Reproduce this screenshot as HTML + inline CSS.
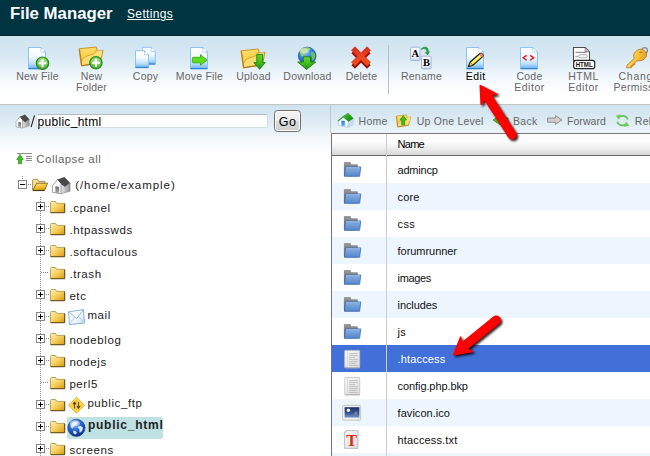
<!DOCTYPE html>
<html>
<head>
<meta charset="utf-8">
<title>File Manager</title>
<style>
html,body{margin:0;padding:0;}
body{width:650px;height:456px;overflow:hidden;background:#fff;font-family:"Liberation Sans",sans-serif;position:relative;}
.abs{position:absolute;}
#hdr{left:0;top:0;width:650px;height:35px;background:#003441;border-bottom:1px solid #00242e;}
#title{left:10px;top:3px;font-size:16.8px;font-weight:bold;color:#fff;line-height:22px;white-space:nowrap;}
#settings{left:127px;top:6px;font-size:12px;color:#fff;text-decoration:underline;line-height:16px;white-space:nowrap;letter-spacing:0.35px;}
#tb{left:0;top:36px;width:650px;height:68px;background:linear-gradient(#cde3f0 0px,#d7e8f3 20px,#f4f9fc 44px,#ffffff 58px,#ffffff 68px);border-bottom:1px solid #c4c4c4;}
.tl{position:absolute;top:71.4px;width:80px;margin-left:-39.5px;text-align:center;font-size:10.5px;line-height:11px;color:#666;letter-spacing:0.2px;white-space:nowrap;}
.tl.on{color:#000;}
#sep{left:388px;top:45px;width:1px;height:49px;background:#b9bdc1;}
#sub{left:0;top:105px;width:650px;height:50px;background:linear-gradient(#cfe3ef 0px,#dbeaf4 14px,#f3f8fb 34px,#ffffff 50px);}
#vdiv{left:330px;top:105px;width:1px;height:28px;background:#c3c6c8;}
#path{left:36px;top:114px;width:229px;height:12px;border-radius:2px;border:1px solid #d3dde4;border-top-color:#b4bcc2;border-left-color:#dbe3e8;background:#fff;font-size:12px;line-height:15px;color:#000;padding:0 0 0 0.5px;letter-spacing:0.3px;white-space:nowrap;overflow:visible;}
#slash{left:30.5px;top:113px;font-size:14px;line-height:16px;color:#000;}
#go{left:274px;top:110px;width:25px;height:20px;border:1px solid #707070;border-radius:3.5px;background:linear-gradient(#f4f4f4,#ebebeb 48%,#dcdcdc 52%,#cfcfcf);font-size:12.5px;line-height:22px;text-align:center;color:#000;box-shadow:inset 0 0 0 1px #fafafa;letter-spacing:0.3px;}
#coll{left:36.3px;top:152px;font-size:11.5px;line-height:14px;color:#666;letter-spacing:0.45px;white-space:nowrap;}
.tr{position:absolute;font-size:11.5px;line-height:14px;color:#222;letter-spacing:0.58px;margin-left:0.4px;white-space:nowrap;}
.nav{position:absolute;top:115px;font-size:10.5px;line-height:13px;color:#666;letter-spacing:0.3px;white-space:nowrap;}
#navbar{display:none;}
#thead{left:331px;top:133px;width:319px;height:21px;background:linear-gradient(#ffffff,#fbfbfb 40%,#ebebeb 72%,#d7d7d7);border-bottom:1px solid #686868;border-top:1px solid #787878;}
#thname{left:397.5px;top:138px;font-size:11px;line-height:13px;color:#000;letter-spacing:-0.7px;}
.row{position:absolute;left:332px;width:318px;height:27px;}
.row.alt{background:#edf5fe;}
.row.sel{background:#4170d9;}
.row span{position:absolute;left:65.6px;top:8px;font-size:11px;line-height:13px;color:#111;white-space:nowrap;letter-spacing:0.1px;}
.row.sel span{color:#fff;}
#lb{left:331px;top:133px;width:1px;height:323px;background:#747474;}
#colsep{left:386px;top:134px;width:1px;height:322px;background:#cdcdcd;}
</style>
</head>
<body>
<div id="hdr" class="abs"></div>
<div id="title" class="abs">File Manager</div>
<div id="settings" class="abs">Settings</div>

<div id="tb" class="abs"></div>
<div class="tl" style="left:37px">New File</div>
<div class="tl" style="left:91px">New<br>Folder</div>
<div class="tl" style="left:145px">Copy</div>
<div class="tl" style="left:199px">Move File</div>
<div class="tl" style="left:253px">Upload</div>
<div class="tl" style="left:307px">Download</div>
<div class="tl" style="left:361px">Delete</div>
<div id="sep" class="abs"></div>
<div class="tl" style="left:421px">Rename</div>
<div class="tl on" style="left:475.2px;letter-spacing:0.5px">Edit</div>
<div class="tl" style="left:529px">Code<br><span style="letter-spacing:0.55px">Editor</span></div>
<div class="tl" style="left:583px"><span style="letter-spacing:0.45px">HTML</span><br><span style="letter-spacing:0.55px">Editor</span></div>
<div class="tl" style="left:618.5px;margin-left:0;text-align:left;letter-spacing:0.75px">Change</div>
<div class="tl" style="left:613.5px;top:82.4px;margin-left:0;text-align:left;letter-spacing:0.3px">Permissions</div>

<div id="sub" class="abs"></div>
<div id="vdiv" class="abs"></div>

<div id="path" class="abs">public<span style="position:relative;top:-1.4px">_</span>html</div>
<div id="go" class="abs">Go</div>
<div id="coll" class="abs">Collapse all</div>

<div class="tr" style="left:74.8px;top:178px;letter-spacing:0.95px">(/home/example)</div>
<div class="tr" style="left:69px;top:201px">.cpanel</div>
<div class="tr" style="left:69px;top:223px">.htpasswds</div>
<div class="tr" style="left:69px;top:245px">.softaculous</div>
<div class="tr" style="left:69px;top:267px">.trash</div>
<div class="tr" style="left:69px;top:289px">etc</div>
<div class="tr" style="left:87px;top:308px">mail</div>
<div class="tr" style="left:69px;top:333px">nodeblog</div>
<div class="tr" style="left:69px;top:355px">nodejs</div>
<div class="tr" style="left:69px;top:377px">perl5</div>
<div class="tr" style="left:87px;top:395.5px">public_ftp</div>
<div class="abs" style="left:67px;top:417px;width:96px;height:22px;background:#c0e1e3;border-radius:2.5px"></div>
<div class="tr" style="left:87.5px;top:417.5px;font-weight:bold;font-size:12px;letter-spacing:0.75px">public_html</div>
<div class="tr" style="left:69px;top:443px">screens</div>

<div id="navbar" class="abs"></div>
<div class="nav" style="left:358.5px">Home</div>
<div class="nav" style="left:416.8px;letter-spacing:0.22px">Up One Level</div>
<div class="nav" style="left:513px">Back</div>
<div class="nav" style="left:567px;letter-spacing:0.05px">Forward</div>
<div class="nav" style="left:634.8px">Reload</div>

<div id="thead" class="abs"></div>
<div id="thname" class="abs">Name</div>
<div class="row" style="top:156px"><span style="letter-spacing:-0.23px">admincp</span></div>
<div class="row alt" style="top:183px"><span style="letter-spacing:0.15px">core</span></div>
<div class="row" style="top:210px"><span style="letter-spacing:0.35px">css</span></div>
<div class="row alt" style="top:237px"><span style="letter-spacing:-0.05px">forumrunner</span></div>
<div class="row" style="top:264px"><span style="letter-spacing:-0.38px">images</span></div>
<div class="row alt" style="top:291px"><span style="letter-spacing:-0.1px">includes</span></div>
<div class="row" style="top:318px"><span style="letter-spacing:0.1px">js</span></div>
<div class="row sel" style="top:345px"><span style="letter-spacing:0.15px">.htaccess</span></div>
<div class="row" style="top:372px"><span style="letter-spacing:-0.09px">config.php.bkp</span></div>
<div class="row alt" style="top:399px"><span style="letter-spacing:0.04px">favicon.ico</span></div>
<div class="row" style="top:426px"><span style="letter-spacing:0.14px">htaccess.txt</span></div>
<div class="row alt" style="top:453px"></div>
<div id="colsep" class="abs"></div>
<div id="lb" class="abs"></div>

<svg id="ic" class="abs" style="left:0;top:0" width="650" height="456" viewBox="0 0 650 456">
<defs>
<linearGradient id="gDoc" x1="0" y1="0" x2="0" y2="1"><stop offset="0" stop-color="#ffffff"/><stop offset="0.42" stop-color="#f3f9ff"/><stop offset="0.74" stop-color="#c2e1fa"/><stop offset="0.93" stop-color="#7dbcf0"/><stop offset="1" stop-color="#3c8cdb"/></linearGradient>
<linearGradient id="gFold" x1="0" y1="0" x2="0.25" y2="1"><stop offset="0" stop-color="#fde27a"/><stop offset="0.5" stop-color="#fbd148"/><stop offset="1" stop-color="#f2b824"/></linearGradient>
<radialGradient id="gPlus" cx="0.5" cy="0.35" r="0.7"><stop offset="0" stop-color="#c9efb2"/><stop offset="0.55" stop-color="#74c653"/><stop offset="1" stop-color="#35992a"/></radialGradient>
<linearGradient id="gGrn" x1="0" y1="0" x2="0" y2="1"><stop offset="0" stop-color="#63d22c"/><stop offset="0.5" stop-color="#43c01c"/><stop offset="1" stop-color="#1f8c10"/></linearGradient>
<radialGradient id="gGlobe" cx="0.4" cy="0.3" r="0.75"><stop offset="0" stop-color="#8fc4ff"/><stop offset="0.5" stop-color="#2b82e8"/><stop offset="1" stop-color="#0e4fb0"/></radialGradient>
<linearGradient id="gRed" x1="0" y1="0" x2="0" y2="1"><stop offset="0" stop-color="#d42a18"/><stop offset="0.5" stop-color="#ec4428"/><stop offset="1" stop-color="#f35212"/></linearGradient>
<linearGradient id="gCard" x1="0" y1="0" x2="0" y2="1"><stop offset="0" stop-color="#ffffff"/><stop offset="0.7" stop-color="#f6f8fd"/><stop offset="1" stop-color="#c9d4f0"/></linearGradient>
<linearGradient id="gKey" x1="0" y1="0" x2="1" y2="1"><stop offset="0" stop-color="#ffe07a"/><stop offset="0.5" stop-color="#fcc340"/><stop offset="1" stop-color="#e9981c"/></linearGradient>
<g id="doc"><path d="M0.5,0.5 H13 L17.5,5 V22 H0.5 Z" fill="url(#gDoc)" stroke="#8fc3ee" stroke-width="1"/><path d="M0.5,21.6 H17.5" stroke="#2f7fd2" stroke-width="1"/><path d="M13,0.5 V5 H17.5" fill="#d8ecfb" stroke="#8cc0ec" stroke-width="0.8"/><circle cx="14.3" cy="3.6" r="1.5" fill="#ffffff" opacity="0.9"/></g>
<g id="sdoc"><path d="M0.5,0.5 H9.5 L13.5,4.5 V17.5 H0.5 Z" fill="url(#gDoc)" stroke="#8fc3ee" stroke-width="1"/><path d="M0.5,17.2 H13.5" stroke="#2f7fd2" stroke-width="1"/><path d="M9.5,0.5 V4.5 H13.5" fill="#d8ecfb" stroke="#8cc0ec" stroke-width="0.8"/><circle cx="10.8" cy="3.2" r="1.3" fill="#ffffff" opacity="0.9"/></g>
<g id="plus"><circle cx="0" cy="0" r="6.2" fill="url(#gPlus)" stroke="#2a8a1c" stroke-width="1.2"/><path d="M-4,0 H4 M0,-4 V4" stroke="#ffffff" stroke-width="1.9"/></g>
<g id="bfolder"><path d="M0,1.8 L17.2,0 L18,2.8 L18.2,4.3 L24,3.2 L22.3,11.5 L20.5,16 L2.3,18.8 Z" fill="url(#gFold)" stroke="#c58a1c" stroke-width="0.9" stroke-linejoin="round"/><path d="M17.6,4.4 L23.4,3.6 L21.8,11" fill="#fbe38a" stroke="none"/><path d="M2.8,14 C5,9.5 8,9 12,7.8 C15,7 16.5,6 17.6,3 L18.2,4.3 L22,3.8 L20.6,11 L19.6,15.6 L3,18 Z" fill="#fde27a" opacity="0.85"/><path d="M2.8,14 C5,9.5 8,9 12,7.8 C15,7 16.5,6 17.6,3" fill="none" stroke="#c9952c" stroke-width="0.8"/><path d="M0.6,2.4 L2.7,18.2" stroke="#a86e10" stroke-width="0.8"/><path d="M2.3,18.8 L20.5,16" stroke="#9a6a1a" stroke-width="0.9"/></g>
</defs>

<!-- New File -->
<use href="#doc" x="28" y="47"/>
<use href="#plus" x="42.5" y="63.2"/>
<!-- New Folder -->
<use href="#bfolder" x="79" y="47"/>
<use href="#plus" x="95.9" y="62.8"/>
<!-- Copy -->
<use href="#sdoc" x="141.8" y="46.8"/>
<use href="#sdoc" x="135" y="50.2"/>
<!-- Move File -->
<use href="#doc" x="190" y="47"/>
<path d="M193.3,57.3 H200.5 V54.6 L207,60.2 L200.5,65.2 V62.8 H193.3 Q192.4,62.8 192.4,61.8 V58.3 Q192.4,57.3 193.3,57.3 Z" fill="#5fdc1a" stroke="#3aa912" stroke-width="0.9" stroke-linejoin="round"/>
<!-- Upload -->
<use href="#bfolder" x="241" y="49"/>
<path d="M256.8,54.4 H262.8 V62.6 H265.2 L259.6,69.3 L253.8,62.6 H256.8 Z" fill="url(#gGrn)" stroke="#1f7f12" stroke-width="0.9" stroke-linejoin="round"/>
<!-- Download -->
<circle cx="307.2" cy="55.9" r="8.8" fill="url(#gGlobe)" stroke="#1b4f9a" stroke-width="0.7"/>
<path d="M299.5,51.5 C300.5,48.5 304,47 307,47.3 C309,47.5 311,48.3 310.5,49.5 C309,51 307.5,51 306,53.5 C304.5,55.5 303.5,54.5 302.5,56.5 C301.5,57 300.5,55 299.5,51.5 Z" fill="#9ccf6e" opacity="0.95"/>
<path d="M311.5,52 C313.5,51.5 315,53 315.3,55 C315.3,58 314,60.5 312.5,61 C311.5,59 312.5,57.5 311.5,56 C310.8,54.5 310.8,53 311.5,52 Z" fill="#6fbf4e"/>
<ellipse cx="304.5" cy="50.8" rx="4.2" ry="2.6" fill="#ffffff" opacity="0.45"/>
<path d="M303.3,56.8 H310.5 V62 H315.8 L306.6,69.4 L297.7,62 H303.3 Z" fill="url(#gGrn)" stroke="#1c7d10" stroke-width="0.9" stroke-linejoin="round"/>
<!-- Delete -->
<g transform="translate(361,59.2)"><path d="M-6,-9.6 L0,-3.6 L6,-9.6 L9.6,-6 L3.6,0 L9.6,6 L6,9.6 L0,3.6 L-6,9.6 L-9.6,6 L-3.6,0 L-9.6,-6 Z" fill="#9c1408"/></g>
<g transform="translate(361,56.3)"><path d="M-6,-9.6 L0,-3.6 L6,-9.6 L9.6,-6 L3.6,0 L9.6,6 L6,9.6 L0,3.6 L-6,9.6 L-9.6,6 L-3.6,0 L-9.6,-6 Z" fill="url(#gRed)" stroke="#c42410" stroke-width="0.5"/></g>
<!-- Rename -->
<rect x="410.6" y="47.2" width="9.4" height="13.2" rx="0.8" fill="url(#gCard)" stroke="#9aabcf" stroke-width="0.9"/>
<text x="415.3" y="57.2" font-family="Liberation Serif, serif" font-weight="bold" font-size="10.5" text-anchor="middle" fill="#000">A</text>
<rect x="421.6" y="56.2" width="9.4" height="12.6" rx="0.8" fill="url(#gCard)" stroke="#9aabcf" stroke-width="0.9"/>
<text x="426.4" y="66.3" font-family="Liberation Serif, serif" font-weight="bold" font-size="10.5" text-anchor="middle" fill="#000">B</text>
<path d="M421,49.4 C422.5,46.8 426,46.2 427.6,48.2 C428.6,49.6 428.4,51 428.2,52 L429.6,51.6 L427.6,55 L425.2,52.6 L426.6,52.4 C426.8,51 426.6,49.8 425.6,49.2 C424.4,48.6 422.6,48.8 421,49.4 Z" fill="#25a043" stroke="#158034" stroke-width="0.4"/>
<!-- Edit -->
<use href="#doc" x="466" y="47"/>
<g transform="translate(468.5,66.4) rotate(-41.5)"><path d="M0,0 L4.2,-2.1 H16.3 Q18.6,-2.1 18.6,0 Q18.6,2.1 16.3,2.1 H4.2 Z" fill="#ffe720" stroke="#111" stroke-width="1.15" stroke-linejoin="round"/><path d="M0,0 L4.2,-2.1 V2.1 Z" fill="#f3c64e" stroke="#1a1a1a" stroke-width="0.5"/><path d="M0,0 L1.6,-0.8 V0.8 Z" fill="#222"/><path d="M16.4,-2.1 H16.6 Q18.6,-2.1 18.6,0 Q18.6,2.1 16.6,2.1 H16.4 Z" fill="#f2818a" stroke="#c04855" stroke-width="0.5"/><path d="M4.6,-0.4 H15.2" stroke="#fff9a8" stroke-width="1.1"/></g>
<!-- Code Editor -->
<use href="#doc" x="520" y="47"/>
<path d="M526.6,55.4 L523.2,57.8 L526.6,60.2 M530.2,55.4 L533.6,57.8 L530.2,60.2" fill="none" stroke="#f01010" stroke-width="1.4"/>
<!-- HTML Editor -->
<path d="M573.5,47.5 H585.2 L589.5,51.8 V61 H573.5 Z" fill="#ffffff" stroke="#4e4e4e" stroke-width="1.1"/>
<path d="M585.2,47.5 V51.8 H589.5 Z" fill="#cfcfcf" stroke="#5c5c5c" stroke-width="0.7"/>
<path d="M575.5,52.3 H586.5" stroke="#777" stroke-width="1"/>
<path d="M575.5,56.3 H578" stroke="#999" stroke-width="1"/>
<rect x="578.6" y="54.6" width="8.6" height="3.2" rx="1.4" fill="#f3f3f3" stroke="#9a9a9a" stroke-width="0.7"/>
<rect x="573.7" y="60.4" width="21" height="8.2" rx="2.2" fill="#ffffff" stroke="#262626" stroke-width="1.2"/>
<text x="584.2" y="67.2" font-family="Liberation Sans, sans-serif" font-weight="bold" font-size="6.6" text-anchor="middle" fill="#111" textLength="17" lengthAdjust="spacingAndGlyphs">HTML</text>
<!-- Key -->
<circle cx="644.7" cy="50.4" r="2.7" fill="none" stroke="#8a8a8a" stroke-width="1.3"/>
<g transform="translate(640,55) rotate(-43)"><path d="M-5.5,-3.6 C-3,-6.2 3.5,-6.4 5.6,-2.2 C6.6,0 6.4,3 4.4,4.8 C2,6.6 -2.6,6 -5,3.2 L-6.6,2.2 L-16.4,2.2 L-18.4,0.4 L-16.6,-1.4 L-6.4,-1.4 Z" fill="url(#gKey)" stroke="#b4690e" stroke-width="0.7" stroke-linejoin="round"/><path d="M-16,2.2 l1,1.4 l1.4,-1.4 l1,1.3 l1.3,-1.3 l1,1.4 l1.4,-1.4" fill="#f0a21c" stroke="#b4690e" stroke-width="0.5"/><path d="M1.5,-2.5 L3.6,-0.4" stroke="#a5640e" stroke-width="1"/></g>
<path d="M31.1,127.2 L34.5,115.4" stroke="#1a1a1a" stroke-width="1.05"/>
<!-- tree -->
<defs>
<linearGradient id="gSF" x1="0" y1="0" x2="1" y2="1"><stop offset="0" stop-color="#fdf0b4"/><stop offset="0.45" stop-color="#f8d466"/><stop offset="1" stop-color="#d99a14"/></linearGradient>
<linearGradient id="gOF" x1="0" y1="0" x2="0.3" y2="1"><stop offset="0" stop-color="#fde48a"/><stop offset="0.5" stop-color="#f8c93a"/><stop offset="1" stop-color="#e3a010"/></linearGradient>
<g id="tplus"><rect x="0.5" y="0.5" width="8" height="8" fill="#fff" stroke="#868686" stroke-width="1"/><path d="M2,4.5 H7 M4.5,2 V7" stroke="#000" stroke-width="1" shape-rendering="crispEdges"/></g>
<g id="sfolder"><path d="M0.5,2.4 V11.6 H14.6 V2.4 H6.6 L5.6,0.5 H1.2 L0.5,1.4 Z" fill="url(#gSF)" stroke="#b89a4e" stroke-width="0.9" stroke-linejoin="round"/><path d="M0.6,11.7 H14.7 V2.6" fill="none" stroke="#5e4c1c" stroke-width="1"/></g>
<g id="house"><path d="M5.6,2.6 L12.4,0 L18.5,6.2 L13.2,9.9 Z" fill="#484848"/><path d="M5.9,2.4 L0.4,8.7 V15.3 L9.2,16.8 V6.6 Z" fill="#ffffff" stroke="#8c8c8c" stroke-width="0.8" stroke-linejoin="round"/><path d="M9.2,7 L13.3,9.4 L18.1,6.1 V14.2 L9.2,16.8 Z" fill="url(#gWall)" stroke="#8c8c8c" stroke-width="0.6" stroke-linejoin="round"/><path d="M3.3,9.2 L7.2,9.8 V16.4 L3.3,15.8 Z" fill="url(#gDoor)"/><path d="M5.9,2.4 L9.4,6.8 L13.3,9.4" fill="none" stroke="#3c3c3c" stroke-width="1"/></g>
<linearGradient id="gWall" x1="0" y1="0" x2="1" y2="0"><stop offset="0" stop-color="#e6e6e6"/><stop offset="1" stop-color="#909090"/></linearGradient>
<linearGradient id="gDoor" x1="0" y1="0" x2="0" y2="1"><stop offset="0" stop-color="#6a6a6a"/><stop offset="1" stop-color="#b0b0b0"/></linearGradient>
</defs>
<path d="M22.5,176 V180" stroke="#8a8a8a" stroke-width="1" stroke-dasharray="1,1"/>
<path d="M28,184.5 H31" stroke="#8a8a8a" stroke-width="1" stroke-dasharray="1,1"/>
<path d="M40.5,197 V456" stroke="#8a8a8a" stroke-width="1" stroke-dasharray="1,1"/>
<path d="M46,206.5 H49" stroke="#8a8a8a" stroke-width="1" stroke-dasharray="1,1"/>
<use href="#tplus" x="36" y="202"/>
<use href="#sfolder" x="50" y="201"/>
<path d="M46,228.5 H49" stroke="#8a8a8a" stroke-width="1" stroke-dasharray="1,1"/>
<use href="#tplus" x="36" y="224"/>
<use href="#sfolder" x="50" y="223"/>
<path d="M46,250.5 H49" stroke="#8a8a8a" stroke-width="1" stroke-dasharray="1,1"/>
<use href="#tplus" x="36" y="246"/>
<use href="#sfolder" x="50" y="245"/>
<path d="M41,272.5 H49" stroke="#8a8a8a" stroke-width="1" stroke-dasharray="1,1"/>
<use href="#sfolder" x="50" y="267"/>
<path d="M46,294.5 H49" stroke="#8a8a8a" stroke-width="1" stroke-dasharray="1,1"/>
<use href="#tplus" x="36" y="290"/>
<use href="#sfolder" x="50" y="289"/>
<path d="M46,316.5 H49" stroke="#8a8a8a" stroke-width="1" stroke-dasharray="1,1"/>
<use href="#tplus" x="36" y="312"/>
<use href="#sfolder" x="50" y="311"/>
<path d="M46,338.5 H49" stroke="#8a8a8a" stroke-width="1" stroke-dasharray="1,1"/>
<use href="#tplus" x="36" y="334"/>
<use href="#sfolder" x="50" y="333"/>
<path d="M46,360.5 H49" stroke="#8a8a8a" stroke-width="1" stroke-dasharray="1,1"/>
<use href="#tplus" x="36" y="356"/>
<use href="#sfolder" x="50" y="355"/>
<path d="M41,382.5 H49" stroke="#8a8a8a" stroke-width="1" stroke-dasharray="1,1"/>
<use href="#sfolder" x="50" y="377"/>
<path d="M46,404.5 H49" stroke="#8a8a8a" stroke-width="1" stroke-dasharray="1,1"/>
<use href="#tplus" x="36" y="400"/>
<use href="#sfolder" x="50" y="399"/>
<path d="M46,426.5 H49" stroke="#8a8a8a" stroke-width="1" stroke-dasharray="1,1"/>
<use href="#tplus" x="36" y="422"/>
<use href="#sfolder" x="50" y="421"/>
<path d="M46,448.5 H49" stroke="#8a8a8a" stroke-width="1" stroke-dasharray="1,1"/>
<use href="#tplus" x="36" y="444"/>
<use href="#sfolder" x="50" y="443"/>
<rect x="18.5" y="180.5" width="8" height="8" fill="#fff" stroke="#868686"/><path d="M20,184.5 H25" stroke="#000" stroke-width="1" shape-rendering="crispEdges"/>
<path d="M32.6,190.2 V180.2 L33.4,179.3 H37.6 L38.6,181.3 H44.8 V183.2" fill="#f6e292" stroke="#9a8750" stroke-width="0.9" stroke-linejoin="round"/>
<path d="M32.8,190.3 L36.6,183.2 H47.6 L44.6,190.3 Z" fill="url(#gOF)" stroke="#7a6326" stroke-width="0.9" stroke-linejoin="round"/>
<path d="M33,190.6 H44.8" stroke="#3a2e10" stroke-width="0.9"/>
<use href="#house" x="52" y="177"/>
<g transform="translate(15.8,114.6) scale(0.74,0.8)"><use href="#house"/></g>
<path d="M17,153.5 H32 M25.5,156.5 H32 M25.5,158.5 H32 M25.5,160.5 H32" stroke="#8e8e8e" stroke-width="1" shape-rendering="crispEdges"/>
<path d="M20,154.4 L23.2,159.6 H21.5 V163.7 H18.5 V159.6 H16.8 Z" fill="#3fc01e" stroke="#238f12" stroke-width="0.7" stroke-linejoin="round"/>
<defs><linearGradient id="gMail" x1="0" y1="0" x2="1" y2="1"><stop offset="0" stop-color="#ffffff"/><stop offset="0.6" stop-color="#eef6fc"/><stop offset="1" stop-color="#bcd8ef"/></linearGradient></defs>
<g transform="translate(68,309)"><path d="M0.6,2.8 L15.4,0.6 L16.6,14 L1.4,15.6 Z" fill="url(#gMail)" stroke="#7eaad2" stroke-width="0.9" stroke-linejoin="round"/><path d="M0.8,3 L8.6,9.6 L15.4,0.8" fill="none" stroke="#86b0d8" stroke-width="0.9"/><path d="M1.4,15.4 L6.6,8.2 M16.4,13.8 L10.4,7.4" stroke="#a4c8e6" stroke-width="0.8"/></g>
<g transform="translate(76.5,405.2)"><path d="M0,-8 L8,0 L0,8 L-8,0 Z" fill="#f8c830" stroke="#e0a010" stroke-width="0.8" stroke-linejoin="round"/><path d="M0,-6.6 L6.6,0 L0,6.6 L-6.6,0 Z" fill="none" stroke="#fde58a" stroke-width="0.8"/><path d="M-2,3.2 V-1.8 M-3.4,-1.2 L-2,-3.4 L-0.6,-1.2 Z M2,-3.2 V1.8 M0.6,1.2 L2,3.4 L3.4,1.2 Z" stroke="#5e4216" stroke-width="0.9" fill="#5e4216"/></g>
<defs><radialGradient id="gGl2" cx="0.4" cy="0.28" r="0.8"><stop offset="0" stop-color="#a8d0ff"/><stop offset="0.4" stop-color="#2f70d8"/><stop offset="1" stop-color="#08236e"/></radialGradient></defs>
<g transform="translate(76.4,427.8)"><circle r="8.6" fill="url(#gGl2)" stroke="#16357e" stroke-width="0.6"/><path d="M-6,-2 C-5,-5 -2,-6.5 1,-6.2 C2,-5 0.5,-4 -0.5,-3 C-1.5,-1.5 -3,-1.5 -3.5,0.5 C-4.5,1 -5.5,0 -6,-2 Z M1.5,-1 C3,-2.5 5.5,-2 6.5,0 C6.5,2.5 5,4.5 3.5,5 C2.5,3.5 3.5,2 2.5,1 C1.5,0.5 1,0 1.5,-1 Z M-3,3 C-1.5,2.5 0,3.5 0.5,5 C0,6.5 -1.5,7 -2.5,6 C-3,5 -3.5,4 -3,3 Z" fill="#e6f0ff" opacity="0.9"/><ellipse cx="-1.5" cy="-4.6" rx="5" ry="2.8" fill="#fff" opacity="0.45"/></g>
<!-- nav icons -->
<defs>
<linearGradient id="gBF" x1="0" y1="0" x2="0" y2="1"><stop offset="0" stop-color="#8ab0e2"/><stop offset="1" stop-color="#5686ca"/></linearGradient>
<linearGradient id="gBB" x1="0" y1="0" x2="0" y2="1"><stop offset="0" stop-color="#9a9a9a"/><stop offset="1" stop-color="#5c5c5c"/></linearGradient>
<g id="blfolder"><path d="M0.3,0.6 Q0.3,0 0.9,0 H6.4 Q7,0 7.2,0.6 L7.6,2.3 H13.6 Q14.2,2.3 14.2,2.9 V13.6 Q14.2,14.3 13.6,14.3 H0.9 Q0.3,14.3 0.3,13.6 Z" fill="url(#gBB)"/><path d="M1.9,4.9 H17.2 L16,14.3 H0.9 Z" fill="url(#gBF)" stroke="#3f6fb8" stroke-width="0.8" stroke-linejoin="round"/><path d="M2.4,5.7 H16.4" stroke="#a9c6ee" stroke-width="0.7"/></g>
<linearGradient id="gPage" x1="0" y1="0" x2="1" y2="1"><stop offset="0" stop-color="#fafafa"/><stop offset="1" stop-color="#dcdcdc"/></linearGradient>
<g id="fdoc"><rect x="0.4" y="0.4" width="15" height="17.4" rx="0.8" fill="url(#gPage)" stroke="#c2c2c2" stroke-width="0.8"/><path d="M3.2,1 V17.2" stroke="#d0d0d0" stroke-width="0.7"/><path d="M4.6,3.6 H13.4 M4.6,5.6 H13.4 M4.6,7.6 H10.8 M4.6,9.6 H13.4 M4.6,11.6 H13.4 M4.6,13.6 H12 M4.6,15.6 H13.4" stroke="#b4b4b4" stroke-width="0.8"/><path d="M0.6,17.8 H15.4" stroke="#a8a8a8" stroke-width="0.8"/></g>
</defs>
<defs><linearGradient id="gRoof" x1="0" y1="0" x2="1" y2="1"><stop offset="0" stop-color="#4ccc34"/><stop offset="0.5" stop-color="#22a418"/><stop offset="1" stop-color="#0e7e0a"/></linearGradient><linearGradient id="gDr" x1="0" y1="0" x2="0" y2="1"><stop offset="0" stop-color="#1478ee"/><stop offset="1" stop-color="#5cb4ff"/></linearGradient></defs><g transform="translate(338,113)"><path d="M4.9,3.9 L0.3,7.8 L0.5,12.5 L9.9,14.3 L10.5,8.2 Z" fill="#ffffff" stroke="#a6c6e8" stroke-width="0.7" stroke-linejoin="round"/><path d="M10.5,8.2 L15,5.4 V11.9 L9.9,14.3 Z" fill="#cbdef4" stroke="#a6c6e8" stroke-width="0.6" stroke-linejoin="round"/><path d="M3.4,7.6 L6.8,7.9 V13.2 L3.4,12.7 Z" fill="url(#gDr)"/><path d="M4.9,3.6 L10,0.2 L15.3,5.3 L10.6,8.5 Z" fill="url(#gRoof)" stroke="#1c9414" stroke-width="0.5" stroke-linejoin="round"/><path d="M5.2,3.8 L0.2,7.9" stroke="#2aa81e" stroke-width="1.2" stroke-linecap="round"/></g>
<g transform="translate(396.2,114.8) scale(0.6,0.65)"><use href="#bfolder"/></g>
<path d="M403.2,115.6 L406.4,120 H404.7 V124.8 H401.7 V120 H400 Z" fill="#3cc31a" stroke="#1f8a12" stroke-width="0.7" stroke-linejoin="round"/>
<path d="M493,120 L500,115.4 V118 H508 V122.2 H500 V124.8 Z" fill="#4cc41e" stroke="#2a8f14" stroke-width="0.7" stroke-linejoin="round"/>
<path d="M547.6,118 H555.4 V115.6 L562,120 L555.4,124.4 V122.2 H547.6 Z" fill="#cfcfcf" stroke="#7c7c7c" stroke-width="0.8" stroke-linejoin="round"/>
<g transform="translate(1245.2,0.2) scale(-1,1)"><g fill="none" stroke="#62c45c" stroke-width="1.8" stroke-linecap="butt"><path d="M617.4,119.2 C618.4,116 622.4,114.8 625.6,116.6"/><path d="M628,121.6 C627,125 623,126.2 619.8,124.4"/></g>
<path d="M624.4,114.2 L629.4,115.6 L626.2,119.6 Z" fill="#6ccc52"/><path d="M621,126.8 L616,125.4 L619.2,121.4 Z" fill="#6ccc52"/></g>
<use href="#blfolder" x="343.6" y="162"/>
<use href="#blfolder" x="343.6" y="189"/>
<use href="#blfolder" x="343.6" y="216"/>
<use href="#blfolder" x="343.6" y="243"/>
<use href="#blfolder" x="343.6" y="270"/>
<use href="#blfolder" x="343.6" y="297"/>
<use href="#blfolder" x="343.6" y="324"/>
<use href="#fdoc" x="344.3" y="350"/>
<use href="#fdoc" x="344.3" y="377"/>
<defs><linearGradient id="gImg" x1="0" y1="0" x2="0" y2="1"><stop offset="0" stop-color="#1c2f6a"/><stop offset="0.6" stop-color="#3a5a9c"/><stop offset="1" stop-color="#7c96c4"/></linearGradient></defs>
<rect x="342.6" y="405.3" width="18" height="14.8" rx="1.2" fill="#f2f2f2" stroke="#b8b8b8" stroke-width="0.8"/><rect x="344.6" y="407.2" width="14.8" height="10.4" fill="url(#gImg)"/><circle cx="348.4" cy="410.3" r="1.7" fill="#f4f2c4"/><path d="M353.4,414.4 L355.6,411.2 L357.6,412.6 L356.8,415.6 Z" fill="#76809a"/><path d="M357.6,420 L360.6,417 V420 Z" fill="#fff" stroke="#b0b0b0" stroke-width="0.5"/>
<path d="M346,430.6 H358 V448.4 H344.4 V432.2 Z" fill="url(#gPage)" stroke="#b4b4b4" stroke-width="0.8" stroke-linejoin="round"/><path d="M346,430.6 V432.2 H344.4" fill="none" stroke="#b4b4b4" stroke-width="0.6"/>
<text x="351.5" y="445.8" font-family="Liberation Serif, serif" font-weight="bold" font-size="16" text-anchor="middle" fill="#e02810">T</text>
<defs><filter id="sh" x="-30%" y="-30%" width="160%" height="160%"><feGaussianBlur stdDeviation="0.8"/></filter></defs>
<g transform="translate(1.7,1.7)" filter="url(#sh)" opacity="0.88"><path d="M480.3,85.6 L481.2,104.3 L483.9,99.5 L491.4,94.6 L496.9,94.2 Z" fill="#1a0000" stroke="#1a0000" stroke-width="1.6" stroke-linejoin="round"/><path d="M487.7,97.0 L512.1,135.0" stroke="#1a0000" stroke-width="9.0" stroke-linecap="round" fill="none"/></g>
<path d="M480.3,85.6 L481.2,104.3 L483.9,99.5 L491.4,94.6 L496.9,94.2 Z" fill="#fe0000" stroke="#fe0000" stroke-width="1.6" stroke-linejoin="round"/><path d="M487.7,97.0 L512.1,135.0" stroke="#fe0000" stroke-width="9.0" stroke-linecap="round" fill="none"/>
<g transform="translate(1.7,1.7)" filter="url(#sh)" opacity="0.88"><path d="M453.8,354.6 L472.3,351.4 L467.4,349.5 L461.6,342.3 L460.7,337.1 Z" fill="#1a0000" stroke="#1a0000" stroke-width="1.6" stroke-linejoin="round"/><path d="M464.5,345.9 L496.2,320.2" stroke="#1a0000" stroke-width="9.3" stroke-linecap="round" fill="none"/></g>
<path d="M453.8,354.6 L472.3,351.4 L467.4,349.5 L461.6,342.3 L460.7,337.1 Z" fill="#fe0000" stroke="#fe0000" stroke-width="1.6" stroke-linejoin="round"/><path d="M464.5,345.9 L496.2,320.2" stroke="#fe0000" stroke-width="9.3" stroke-linecap="round" fill="none"/>
</svg>
</body>
</html>
